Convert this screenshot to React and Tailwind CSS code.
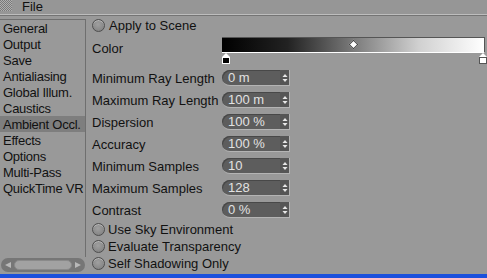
import React from "react";

const items = ["General","Output","Save","Antialiasing","Global Illum.","Caustics","Ambient Occl.","Effects","Options","Multi-Pass","QuickTime VR"];
const fields = [
  ["Minimum Ray Length","0 m"],
  ["Maximum Ray Length","100 m"],
  ["Dispersion","100 %"],
  ["Accuracy","100 %"],
  ["Minimum Samples","10"],
  ["Maximum Samples","128"],
  ["Contrast","0 %"],
];

function Check() {
  return <div className="w-[13px] h-[13px] rounded-full border border-[#4e4e4e] bg-[radial-gradient(circle_at_45%_40%,#a0a0a0,#7c7c7c)] shadow-[inset_0_1px_0_#b8b8b8] shrink-0" />;
}

function Spin() {
  return (
    <svg width="6" height="10" viewBox="0 0 6 10">
      <polygon points="3,1 5.5,4 0.5,4" fill="#e8e8e8" />
      <polygon points="3,9 5.5,6 0.5,6" fill="#e8e8e8" />
    </svg>
  );
}

export default function App() {
  return (
    <div className="w-[487px] h-[278px] bg-[#999999] overflow-hidden flex flex-col text-[13px] leading-none text-[#111]" style={{fontFamily: '"Liberation Sans", Arial, sans-serif'}}>
      <div className="h-[14px] flex items-start shrink-0 bg-[#969696]">
        <div className="w-[12px] h-[11px] bg-[repeating-conic-gradient(#b0b0b0_0_25%,#7a7a7a_0_50%)] bg-[length:2px_2px]" />
        <div className="ml-[10px] h-[14px] leading-[13px] text-[13px]">File</div>
      </div>
      <div className="h-[1px] bg-[#bdbdbd] shrink-0" />
      <div className="h-[1px] bg-[#747474] shrink-0" />
      <div className="flex flex-1 min-h-0">
        <div className="w-[86px] flex flex-col shrink-0 pt-[3px]">
          <div className="flex-1 border-t border-r border-[#6f6f6f] flex flex-col">
            {items.map((t) => (
              <div key={t} className={"h-[16px] flex items-center pl-[3px] whitespace-nowrap tracking-[-0.25px] " + (t === "Ambient Occl." ? "bg-[#7e7e7e]" : "")}>{t}</div>
            ))}
          </div>
          <div className="h-[14px] mt-[1px] mb-[2px] mx-[1px] rounded-full bg-[#767676] flex items-center px-[3px] gap-[2px]">
            <svg width="8" height="8" viewBox="0 0 8 8"><polygon points="1,4 7,1 7,7" fill="#b8b8b8" /></svg>
            <div className="flex-1 h-[10px] rounded-full bg-[#a2a2a2] border border-[#8a8a8a]" />
            <svg width="8" height="8" viewBox="0 0 8 8"><polygon points="7,4 1,1 1,7" fill="#b8b8b8" /></svg>
          </div>
        </div>
        <div className="flex-1 flex flex-col pl-[6px]">
          <div className="h-[18px] flex items-center gap-[4px] pt-[1px]">
            <Check />
            <span>Apply to Scene</span>
          </div>
          <div className="h-[33px] flex items-start">
            <div className="w-[130px] mt-[8px]">Color</div>
            <div className="flex flex-col mt-[3px]">
              <div className="relative w-[263px] h-[16px] border-t border-r border-[#555] border-b border-b-white bg-[linear-gradient(to_right,#000_0%,#222_25%,#7a7a7a_50%,#d0d0d0_75%,#fff_100%)]">
                <div className="absolute left-[128px] top-[3px] w-[7px] h-[7px] rotate-45 bg-white border border-[#444]" />
              </div>
              <div className="flex justify-between w-[265px]">
                <div className="flex flex-col items-center w-[8px]">
                  <div className="w-0 h-0 border-l-[4px] border-r-[4px] border-b-[4px] border-l-transparent border-r-transparent border-b-white" />
                  <div className="w-[8px] h-[7px] bg-black border border-white" />
                </div>
                <div className="flex flex-col items-center w-[8px]">
                  <div className="w-0 h-0 border-l-[4px] border-r-[4px] border-b-[4px] border-l-transparent border-r-transparent border-b-white" />
                  <div className="w-[8px] h-[7px] bg-white border border-[#555]" />
                </div>
              </div>
            </div>
          </div>
          {fields.map(([l, v]) => (
            <div key={l} className="h-[22px] flex items-center">
              <div className="w-[130px] whitespace-nowrap">{l}</div>
              <div className="w-[68px] h-[16px] rounded-l-full rounded-r-[2px] bg-[#5d5d5d] border-b border-r border-[#b4b4b4] shadow-[inset_1px_1px_0_#484848] flex items-center">
                <span className="flex-1 pl-[6px] text-[#e2e2e2] text-[13px]">{v}</span>
                <div className="w-[9px] h-full flex items-center justify-center bg-[#555]"><Spin /></div>
              </div>
            </div>
          ))}
          {["Use Sky Environment","Evaluate Transparency","Self Shadowing Only"].map((t) => (
            <div key={t} className="h-[17px] flex items-center gap-[3px]">
              <Check />
              <span>{t}</span>
            </div>
          ))}
        </div>
      </div>
      <div className="h-[4px] bg-[#1c50dc] shrink-0" />
    </div>
  );
}
